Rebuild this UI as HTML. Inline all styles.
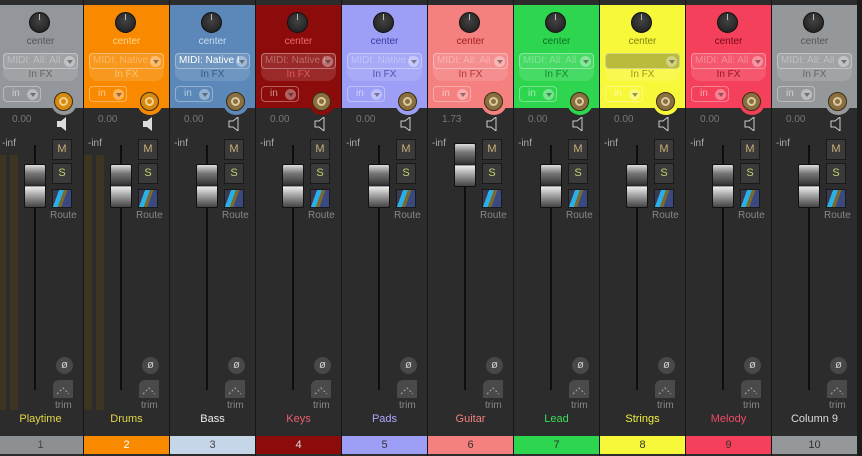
<!DOCTYPE html>
<html><head><style>
*{margin:0;padding:0;box-sizing:border-box}
body{width:862px;height:456px;background:#2a2a2a;position:relative;overflow:hidden;font-family:"Liberation Sans",sans-serif;font-size:10px}
.ch{position:absolute;top:0;width:86px;height:456px;border-left:1px solid #161616;background:#2c2c2c}
.ch>*{position:absolute}
.top{left:0;top:5px;width:85px;height:103px;background:var(--c)}
.bump{left:53px;top:89px;width:26px;height:26px;border-radius:50%;background:var(--c)}
.knob{left:31px;top:12px;width:21px;height:21px;border-radius:50%;background:radial-gradient(circle at 50% 40%,#444,#1a1a1a);border:1px solid #111}
.knob:after{content:"";position:absolute;left:9px;top:1px;width:1px;height:6px;background:#bbb}
.cen{left:0;width:85px;top:36px;text-align:center;color:var(--t);font-size:10px}
.fx{left:5px;top:53px;width:75px;height:28px;border-radius:3px 3px 9px 9px;background:rgba(255,255,255,.12)}
.midi{left:5px;top:53px;width:75px;height:16px;border:1px solid rgba(255,255,255,.35);border-radius:4px;color:rgba(255,255,255,.3);font-size:10px;padding:1px 0 0 3px;white-space:nowrap;overflow:hidden}
.dd{position:absolute;right:2px;top:2px;width:11px;height:11px;border-radius:50%;background:rgba(255,255,255,.35)}
.dd:after{content:"";position:absolute;left:3px;top:4px;border-left:3px solid transparent;border-right:3px solid transparent;border-top:4px solid rgba(0,0,0,.4)}
.infx{left:5px;top:69px;width:75px;text-align:center;color:var(--t);opacity:.8;font-size:10px}
.in{left:5px;top:86px;width:38px;height:16px;border:1px solid rgba(255,255,255,.35);border-radius:4px;color:rgba(255,255,255,.55);padding:1px 0 0 8px}
.ring{left:56px;top:92px;width:19px;height:19px;border-radius:50%;background:var(--r);border:1px solid #3a2a10}
.ring:after{content:"";position:absolute;left:4px;top:4px;width:9px;height:9px;border-radius:50%;border:2px solid rgba(255,240,200,.7);box-sizing:border-box}
.vol{left:14px;top:114px;color:#777;font-size:10px}
.spk{left:58px;top:117px}
.inf{left:4px;top:138px;color:#aaa;font-size:10px}
.btn{left:54px;width:20px;height:21px;background:#3a3a3a;border:1px solid #1a1a1a;color:#c9b07a;text-align:center;line-height:19px;font-size:11px}
.rt{left:54px;top:189px;width:20px;height:19px;background:linear-gradient(110deg,#3a3a50 0 25%,#2ab0e8 25% 45%,#7a6a30 45% 60%,#3a4a80 60%);border:1px solid #1a1a1a}
.rtt{left:52px;top:210px;color:#888;font-size:10px}
.trk{left:36px;top:145px;width:2px;height:245px;background:#0e0e0e}
.cap{left:26px;width:22px;height:44px;border:1px solid #111;border-radius:2px;background:linear-gradient(#ddd,#777 20%,#3a3a3a 45%,#222 50%,#eee 52%,#999 75%,#444)}
.m1,.m2{top:155px;width:8px;height:255px;background:#3d3522}
.m1{left:0}.m2{left:12px}
.ph{left:58px;top:357px;width:17px;height:17px;border-radius:50%;background:#484848;color:#ccc;text-align:center;line-height:17px;font-size:11px}
.tr{left:55px;top:380px;width:20px;height:18px;background:#4a4a4a;border-radius:6px 0 0 0}
.trt{left:57px;top:400px;color:#888;font-size:10px}
.nm{left:0;width:85px;top:413px;text-align:center;color:var(--n);font-size:11px}
.num{left:0;top:436px;width:85px;height:18px;background:var(--b);text-align:center;line-height:18px;color:var(--u);font-size:11px}
</style></head><body>
<div style="position:absolute;left:0;top:0;width:862px;height:5px;background:#1c1c1c"></div>

<div class="ch" style="left:-3px;--c:#93969a;--t:#555;--r:#d78a10;--n:#e3d64a;--b:#8d9093;--u:#444">
<div class="top"></div><div class="bump"></div><div class="knob"></div><div class="cen">center</div><div class="fx"></div><div class="midi">MIDI: All: All<span class="dd"></span></div><div class="infx">In FX</div><div class="in">in<span class="dd"></span></div><div class="ring"></div>
<div class="vol">0.00</div><svg class="spk" width="14" height="14"><path d="M1 4h4l5-4v14l-5-4H1z" fill="#ddd"/></svg><div class="inf">-inf</div>
<div class="m1"></div><div class="m2"></div><div class="trk"></div><div class="cap" style="top:164px"></div>
<div class="btn" style="top:139px">M</div><div class="btn" style="top:163px;color:#c8d070">S</div><div class="rt"></div><div class="rtt">Route</div>
<div class="ph">ø</div><div class="tr"><svg width="20" height="18"><path d="M4 14l6-6 6 6" fill="none" stroke="#aaa" stroke-dasharray="2 2"/></svg></div><div class="trt">trim</div><div class="nm">Playtime</div><div class="num">1</div></div>

<div class="ch" style="left:83px;--c:#f98a00;--t:#fcd48a;--r:#d78a10;--n:#e3d64a;--b:#f98a00;--u:#fff">
<div class="top"></div><div class="bump"></div><div class="knob"></div><div class="cen">center</div><div class="fx"></div><div class="midi">MIDI: Native I<span class="dd"></span></div><div class="infx">In FX</div><div class="in">in<span class="dd"></span></div><div class="ring"></div>
<div class="vol">0.00</div><svg class="spk" width="14" height="14"><path d="M1 4h4l5-4v14l-5-4H1z" fill="#ddd"/></svg><div class="inf">-inf</div>
<div class="m1"></div><div class="m2"></div><div class="trk"></div><div class="cap" style="top:164px"></div>
<div class="btn" style="top:139px">M</div><div class="btn" style="top:163px;color:#c8d070">S</div><div class="rt"></div><div class="rtt">Route</div>
<div class="ph">ø</div><div class="tr"><svg width="20" height="18"><path d="M4 14l6-6 6 6" fill="none" stroke="#aaa" stroke-dasharray="2 2"/></svg></div><div class="trt">trim</div><div class="nm">Drums</div><div class="num">2</div></div>

<div class="ch" style="left:169px;--c:#5b88b8;--t:#c8dcf0;--r:#8a7040;--n:#eee;--b:#c4d6e8;--u:#444">
<div class="top"></div><div class="bump"></div><div class="knob"></div><div class="cen">center</div><div class="fx"></div><div class="midi" style="color:#fff">MIDI: Native I<span class="dd"></span></div><div class="infx" style="color:#2a4a78">In FX</div><div class="in">in<span class="dd"></span></div><div class="ring"></div>
<div class="vol">0.00</div><svg class="spk" width="14" height="14"><path d="M1 4h4l5-4v14l-5-4H1z" fill="none" stroke="#ccc"/></svg><div class="inf">-inf</div>
<div class="trk"></div><div class="cap" style="top:164px"></div>
<div class="btn" style="top:139px">M</div><div class="btn" style="top:163px;color:#c8d070">S</div><div class="rt"></div><div class="rtt">Route</div>
<div class="ph">ø</div><div class="tr"><svg width="20" height="18"><path d="M4 14l6-6 6 6" fill="none" stroke="#aaa" stroke-dasharray="2 2"/></svg></div><div class="trt">trim</div><div class="nm">Bass</div><div class="num">3</div></div>

<div class="ch" style="left:255px;--c:#8c0c0c;--t:#f06a6a;--r:#8a7040;--n:#e8606e;--b:#8c0c0c;--u:#ddd">
<div class="top"></div><div class="bump"></div><div class="knob"></div><div class="cen">center</div><div class="fx"></div><div class="midi">MIDI: Native I<span class="dd"></span></div><div class="infx">In FX</div><div class="in">in<span class="dd"></span></div><div class="ring"></div>
<div class="vol">0.00</div><svg class="spk" width="14" height="14"><path d="M1 4h4l5-4v14l-5-4H1z" fill="none" stroke="#ccc"/></svg><div class="inf">-inf</div>
<div class="trk"></div><div class="cap" style="top:164px"></div>
<div class="btn" style="top:139px">M</div><div class="btn" style="top:163px;color:#c8d070">S</div><div class="rt"></div><div class="rtt">Route</div>
<div class="ph">ø</div><div class="tr"><svg width="20" height="18"><path d="M4 14l6-6 6 6" fill="none" stroke="#aaa" stroke-dasharray="2 2"/></svg></div><div class="trt">trim</div><div class="nm">Keys</div><div class="num">4</div></div>

<div class="ch" style="left:341px;--c:#9d9ef6;--t:#3a3aa0;--r:#8a7040;--n:#a8a8ff;--b:#9d9ef6;--u:#333">
<div class="top"></div><div class="bump"></div><div class="knob"></div><div class="cen">center</div><div class="fx"></div><div class="midi">MIDI: Native I<span class="dd"></span></div><div class="infx">In FX</div><div class="in">in<span class="dd"></span></div><div class="ring"></div>
<div class="vol">0.00</div><svg class="spk" width="14" height="14"><path d="M1 4h4l5-4v14l-5-4H1z" fill="none" stroke="#ccc"/></svg><div class="inf">-inf</div>
<div class="trk"></div><div class="cap" style="top:164px"></div>
<div class="btn" style="top:139px">M</div><div class="btn" style="top:163px;color:#c8d070">S</div><div class="rt"></div><div class="rtt">Route</div>
<div class="ph">ø</div><div class="tr"><svg width="20" height="18"><path d="M4 14l6-6 6 6" fill="none" stroke="#aaa" stroke-dasharray="2 2"/></svg></div><div class="trt">trim</div><div class="nm">Pads</div><div class="num">5</div></div>

<div class="ch" style="left:427px;--c:#f48080;--t:#a02020;--r:#8a7040;--n:#f48080;--b:#f48080;--u:#333">
<div class="top"></div><div class="bump"></div><div class="knob"></div><div class="cen">center</div><div class="fx"></div><div class="midi">MIDI: All: All<span class="dd"></span></div><div class="infx">In FX</div><div class="in">in<span class="dd"></span></div><div class="ring"></div>
<div class="vol">1.73</div><svg class="spk" width="14" height="14"><path d="M1 4h4l5-4v14l-5-4H1z" fill="none" stroke="#ccc"/></svg><div class="inf">-inf</div>
<div class="trk"></div><div class="cap" style="top:143px"></div>
<div class="btn" style="top:139px">M</div><div class="btn" style="top:163px;color:#c8d070">S</div><div class="rt"></div><div class="rtt">Route</div>
<div class="ph">ø</div><div class="tr"><svg width="20" height="18"><path d="M4 14l6-6 6 6" fill="none" stroke="#aaa" stroke-dasharray="2 2"/></svg></div><div class="trt">trim</div><div class="nm">Guitar</div><div class="num">6</div></div>

<div class="ch" style="left:513px;--c:#2ed650;--t:#0a7020;--r:#8a7040;--n:#3adc5a;--b:#2ed650;--u:#333">
<div class="top"></div><div class="bump"></div><div class="knob"></div><div class="cen">center</div><div class="fx"></div><div class="midi">MIDI: All: All<span class="dd"></span></div><div class="infx">In FX</div><div class="in">in<span class="dd"></span></div><div class="ring"></div>
<div class="vol">0.00</div><svg class="spk" width="14" height="14"><path d="M1 4h4l5-4v14l-5-4H1z" fill="none" stroke="#ccc"/></svg><div class="inf">-inf</div>
<div class="trk"></div><div class="cap" style="top:164px"></div>
<div class="btn" style="top:139px">M</div><div class="btn" style="top:163px;color:#c8d070">S</div><div class="rt"></div><div class="rtt">Route</div>
<div class="ph">ø</div><div class="tr"><svg width="20" height="18"><path d="M4 14l6-6 6 6" fill="none" stroke="#aaa" stroke-dasharray="2 2"/></svg></div><div class="trt">trim</div><div class="nm">Lead</div><div class="num">7</div></div>

<div class="ch" style="left:599px;--c:#f8f83a;--t:#808010;--r:#8a7040;--n:#f0f040;--b:#f8f83a;--u:#333">
<div class="top"></div><div class="bump"></div><div class="knob"></div><div class="cen">center</div><div class="fx"></div><div class="midi" style="background:rgba(0,0,0,.25)"><span class="dd"></span></div><div class="infx">In FX</div><div class="in">in<span class="dd"></span></div><div class="ring"></div>
<div class="vol">0.00</div><svg class="spk" width="14" height="14"><path d="M1 4h4l5-4v14l-5-4H1z" fill="none" stroke="#ccc"/></svg><div class="inf">-inf</div>
<div class="trk"></div><div class="cap" style="top:164px"></div>
<div class="btn" style="top:139px">M</div><div class="btn" style="top:163px;color:#c8d070">S</div><div class="rt"></div><div class="rtt">Route</div>
<div class="ph">ø</div><div class="tr"><svg width="20" height="18"><path d="M4 14l6-6 6 6" fill="none" stroke="#aaa" stroke-dasharray="2 2"/></svg></div><div class="trt">trim</div><div class="nm">Strings</div><div class="num">8</div></div>

<div class="ch" style="left:685px;--c:#f4405a;--t:#7a0818;--r:#8a7040;--n:#f04a66;--b:#f4405a;--u:#333">
<div class="top"></div><div class="bump"></div><div class="knob"></div><div class="cen">center</div><div class="fx"></div><div class="midi">MIDI: All: All<span class="dd"></span></div><div class="infx">In FX</div><div class="in">in<span class="dd"></span></div><div class="ring"></div>
<div class="vol">0.00</div><svg class="spk" width="14" height="14"><path d="M1 4h4l5-4v14l-5-4H1z" fill="none" stroke="#ccc"/></svg><div class="inf">-inf</div>
<div class="trk"></div><div class="cap" style="top:164px"></div>
<div class="btn" style="top:139px">M</div><div class="btn" style="top:163px;color:#c8d070">S</div><div class="rt"></div><div class="rtt">Route</div>
<div class="ph">ø</div><div class="tr"><svg width="20" height="18"><path d="M4 14l6-6 6 6" fill="none" stroke="#aaa" stroke-dasharray="2 2"/></svg></div><div class="trt">trim</div><div class="nm">Melody</div><div class="num">9</div></div>

<div class="ch" style="left:771px;--c:#95989b;--t:#555;--r:#8a7040;--n:#ddd;--b:#95989b;--u:#333">
<div class="top"></div><div class="bump"></div><div class="knob"></div><div class="cen">center</div><div class="fx"></div><div class="midi">MIDI: All: All<span class="dd"></span></div><div class="infx">In FX</div><div class="in">in<span class="dd"></span></div><div class="ring"></div>
<div class="vol">0.00</div><svg class="spk" width="14" height="14"><path d="M1 4h4l5-4v14l-5-4H1z" fill="none" stroke="#ccc"/></svg><div class="inf">-inf</div>
<div class="trk"></div><div class="cap" style="top:164px"></div>
<div class="btn" style="top:139px">M</div><div class="btn" style="top:163px;color:#c8d070">S</div><div class="rt"></div><div class="rtt">Route</div>
<div class="ph">ø</div><div class="tr"><svg width="20" height="18"><path d="M4 14l6-6 6 6" fill="none" stroke="#aaa" stroke-dasharray="2 2"/></svg></div><div class="trt">trim</div><div class="nm">Column 9</div><div class="num">10</div></div>
<div style="position:absolute;left:857px;top:0;width:5px;height:456px;background:#1c1c1c"></div>
</body></html>
